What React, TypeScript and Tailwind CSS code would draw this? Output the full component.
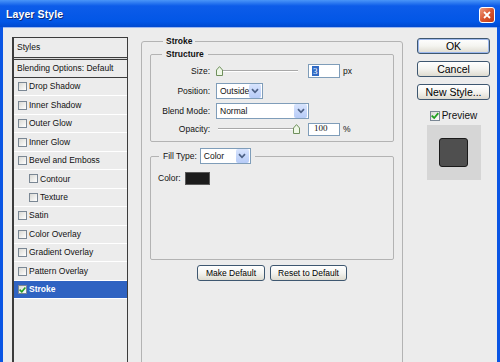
import React from 'react';

interface Effect {
  label: string;
  sub?: boolean;
  checked?: boolean;
  active?: boolean;
}

const effects: Effect[] = [
  { label: 'Drop Shadow' },
  { label: 'Inner Shadow' },
  { label: 'Outer Glow' },
  { label: 'Inner Glow' },
  { label: 'Bevel and Emboss' },
  { label: 'Contour', sub: true },
  { label: 'Texture', sub: true },
  { label: 'Satin' },
  { label: 'Color Overlay' },
  { label: 'Gradient Overlay' },
  { label: 'Pattern Overlay' },
  { label: 'Stroke', checked: true, active: true },
];

const CheckBox = ({ checked = false, size = 'w-[9px] h-[9px]' }: { checked?: boolean; size?: string }) => (
  <span className={`${size} shrink-0 border border-[#7a8794] bg-gradient-to-br from-[#d9d9d4] to-white flex items-center justify-center`}>
    {checked && (
      <svg width="8" height="8" viewBox="0 0 8 8" fill="none" stroke="#21a121" strokeWidth="1.8" strokeLinecap="square">
        <path d="M1.3 4.2 L3.2 6 L6.7 1.8" />
      </svg>
    )}
  </span>
);

const Chevron = () => (
  <svg width="8" height="6" viewBox="0 0 8 6" fill="none" stroke="#4d6185" strokeWidth="1.7">
    <path d="M1 1.2 L4 4.3 L7 1.2" />
  </svg>
);

const Select = ({ value, width }: { value: string; width: string }) => (
  <div className={`${width} h-[16px] bg-white border border-[#7f9db9] flex items-center`}>
    <span className="flex-1 pl-[3px] leading-none">{value}</span>
    <span className="w-[13px] h-[14px] mr-[1px] rounded-[2px] bg-gradient-to-b from-[#d8e4fd] to-[#b6cbf7] flex items-center justify-center">
      <Chevron />
    </span>
  </div>
);

const Thumb = () => (
  <svg width="7" height="10" viewBox="0 0 7 10" className="shrink-0">
    <path d="M0.5 4 L3.5 0.6 L6.5 4 L6.5 9.5 L0.5 9.5 Z" fill="#eef7e6" stroke="#6f8f5c" strokeWidth="1" />
  </svg>
);

const Track = ({ className = '' }: { className?: string }) => (
  <span className={`flex-1 h-[2px] border-t border-[#a8a8a8] border-b border-b-white ${className}`} />
);

const XpButton = ({ label, width, isDefault = false, textSize = 'text-[10.5px]' }: { label: string; width: string; isDefault?: boolean; textSize?: string }) => (
  <div
    className={`${width} ${textSize} h-[16px] rounded-[3px] border border-[#3e5770] bg-gradient-to-b from-white via-[#f4f4f0] to-[#dedbd0] flex items-center justify-center text-black leading-none ${isDefault ? 'shadow-[inset_0_0_0_1px_#9cb8ee]' : ''}`}
  >
    {label}
  </div>
);

export default function App() {
  return (
    <div className="w-[500px] h-[362px] overflow-hidden bg-[#0a55e4] flex flex-col font-['Liberation_Sans',Arial,sans-serif] text-[8.5px] text-[#111]">
      {/* title bar */}
      <div className="h-[27px] shrink-0 flex items-center pt-[3px] pl-[6px] pr-[5px] bg-[linear-gradient(to_bottom,#4a95f8_0%,#0d5ce9_22%,#0256e6_80%,#0049d0_100%)]">
        <span className="flex-1 text-white font-bold text-[10.5px] tracking-[0.1px] [text-shadow:1px_1px_0_#0a2a7a]">Layer Style</span>
        <span className="w-[16px] h-[16px] rounded-[3px] border border-white bg-gradient-to-br from-[#ee9d80] via-[#d9552f] to-[#bf3a14] flex items-center justify-center">
          <svg width="8" height="8" viewBox="0 0 8 8" stroke="white" strokeWidth="1.8">
            <path d="M1 1 L7 7 M7 1 L1 7" />
          </svg>
        </span>
      </div>

      {/* body */}
      <div className="flex-1 mx-[3px] bg-[#ececec] border-t border-[#9bb7f0] flex items-start">
        {/* styles list */}
        <div className="ml-[9px] mt-[9px] w-[116px] h-[400px] border border-[#3c3c3c] border-l-2 bg-[#ececec] flex flex-col">
          <div className="h-[20px] flex items-center pl-[3px] border-b border-[#3c3c3c]">Styles</div>
          <div className="h-[1px] bg-[#d8d8d8]" />
          <div className="h-[19px] flex items-center pl-[3px] border-t border-b border-[#3c3c3c]">Blending Options: Default</div>
          {effects.map((e) => (
            <div
              key={e.label}
              className={`h-[18.45px] flex items-center gap-[2px] border-b border-white ${e.sub ? 'pl-[15px]' : 'pl-[4px]'} ${e.active ? 'bg-[#2f63c2] text-white font-bold' : ''}`}
            >
              <CheckBox checked={e.checked} />
              <span>{e.label}</span>
            </div>
          ))}
        </div>

        {/* stroke group */}
        <fieldset className="ml-[13px] mt-[8px] w-[262px] h-[360px] border border-[#b3b3b3] rounded-[3px] px-[8px]">
          <legend className="ml-[13px] px-[3px] font-bold leading-[10px]">Stroke</legend>

          <fieldset className="mt-[3px] border border-[#b3b3b3] rounded-[2px] pb-[4px]">
            <legend className="ml-[11px] px-[4px] font-bold leading-[10px]">Structure</legend>

            <div className="mt-[4px] h-[16px] flex items-center">
              <span className="w-[59px] text-right">Size:</span>
              <div className="ml-[6px] w-[84px] flex items-center">
                <Thumb />
                <Track className="mr-[2px]" />
              </div>
              <div className="ml-[8px] w-[32px] h-[14px] bg-white border border-[#7f9db9] flex items-center pl-[3px]">
                <span className="bg-[#316ac5] text-white font-['Liberation_Serif',serif] text-[9px] leading-[10px] px-[1px]">3</span>
              </div>
              <span className="ml-[3px]">px</span>
            </div>

            <div className="mt-[4px] h-[16px] flex items-center">
              <span className="w-[59px] text-right">Position:</span>
              <div className="ml-[6px]">
                <Select value="Outside" width="w-[47px]" />
              </div>
            </div>

            <div className="mt-[4px] h-[16px] flex items-center">
              <span className="w-[59px] text-right">Blend Mode:</span>
              <div className="ml-[6px]">
                <Select value="Normal" width="w-[93px]" />
              </div>
            </div>

            <div className="mt-[2px] h-[16px] flex items-center">
              <span className="w-[59px] text-right">Opacity:</span>
              <div className="ml-[6px] w-[84px] flex items-center">
                <Track className="ml-[2px]" />
                <Thumb />
              </div>
              <div className="ml-[8px] w-[32px] h-[13px] bg-white border border-[#7f9db9] flex items-center pl-[5px] font-['Liberation_Serif',serif] text-[9px]">
                100
              </div>
              <span className="ml-[3px]">%</span>
            </div>
          </fieldset>

          <fieldset className="mt-[6px] h-[112px] border border-[#b3b3b3] rounded-[2px]">
            <legend className="ml-[8px] px-[4px] flex items-center gap-[3px]">
              <span>Fill Type:</span>
              <Select value="Color" width="w-[51px]" />
            </legend>
            <div className="mt-[8px] h-[13px] flex items-center pl-[7px] gap-[4px]">
              <span>Color:</span>
              <span className="w-[25px] h-[13px] bg-[#1c1c1c] border border-[#5a5a5a]" />
            </div>
          </fieldset>

          <div className="mt-[5px] flex justify-center gap-[5px]">
            <XpButton label="Make Default" width="w-[68px]" textSize="text-[8.5px]" />
            <XpButton label="Reset to Default" width="w-[77px]" textSize="text-[8.5px]" />
          </div>
        </fieldset>

        {/* right column */}
        <div className="ml-[14px] mt-[10px] w-[73px] flex flex-col items-center">
          <XpButton label="OK" width="w-[73px]" isDefault />
          <div className="mt-[7px]">
            <XpButton label="Cancel" width="w-[73px]" />
          </div>
          <div className="mt-[7px]">
            <XpButton label="New Style..." width="w-[73px]" />
          </div>
          <div className="mt-[10px] h-[11px] flex items-center gap-[2px] text-[10px]">
            <CheckBox checked size="w-[10px] h-[10px]" />
            <span>Preview</span>
          </div>
          <div className="mt-[4px] w-[54px] h-[55px] bg-[#d6d6d6] flex items-center justify-center">
            <span className="w-[29px] h-[29px] rounded-[3px] bg-[#4f4f4f] border border-[#1a1a1a]" />
          </div>
        </div>
      </div>
    </div>
  );
}
